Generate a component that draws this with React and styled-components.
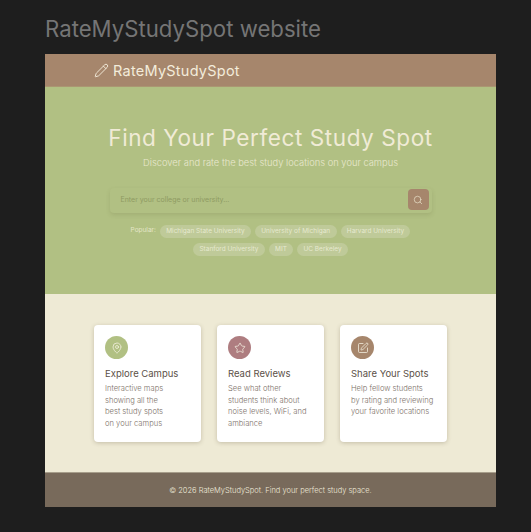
import React from 'react'
import styled, { createGlobalStyle } from 'styled-components'
import { Pencil, MapPin, Star, SquarePen, Search } from 'lucide-react'

const GlobalStyle = createGlobalStyle`
    html, body {
        margin: 0;
        padding: 0;
        background: #1e1e1e;
        font-family: 'Inter', 'Liberation Sans', sans-serif;
    }
    * {
        box-sizing: border-box;
    }
`

const Page = styled.div`
    width: 531px;
    height: 532px;
    overflow: hidden;
    padding: 15px 35px 0 45px;
`

const PageTitle = styled.h1`
    margin: 0 0 11px;
    height: 28px;
    font-size: 22.2px;
    line-height: 28px;
    font-weight: 400;
    color: #757575;
    white-space: nowrap;
`

const Frame = styled.div`
    width: 451px;
    display: flex;
    flex-direction: column;
`

const Header = styled.header`
    height: 33px;
    background: #a6866c;
    border-bottom: 1px solid #ab9672;
    display: flex;
    align-items: center;
    gap: 4px;
    padding-left: 49px;
    color: #f3ecdb;
`

const Brand = styled.span`
    font-size: 14.5px;
    letter-spacing: 0.25px;
`

const Hero = styled.section`
    height: 207px;
    background: #b1c083;
    display: flex;
    flex-direction: column;
    align-items: center;
    padding-top: 36px;
`

const HeroTitle = styled.h2`
    margin: 0;
    font-size: 22.6px;
    line-height: 29px;
    font-weight: 400;
    letter-spacing: 0.55px;
    color: #f0ebd6;
    white-space: nowrap;
`

const HeroText = styled.p`
    margin: 4px 0 0;
    font-size: 9.35px;
    line-height: 14px;
    font-weight: 300;
    color: #e9e8cf;
    white-space: nowrap;
`

const SearchBox = styled.div`
    margin-top: 18px;
    width: 322px;
    height: 25px;
    border-radius: 4px;
    background: #b1c083;
    box-shadow: 0 2px 4px rgba(90, 90, 50, 0.16);
    display: flex;
    align-items: center;
    justify-content: space-between;
    padding: 0 3px 2px 11px;
`

const Placeholder = styled.span`
    font-size: 7px;
    color: #8e9a62;
`

const SearchButton = styled.button`
    width: 21px;
    height: 21px;
    border: 0;
    padding: 0;
    border-radius: 4px;
    background: #a6866c;
    color: #f0ebd6;
    display: flex;
    align-items: center;
    justify-content: center;
`

const Popular = styled.div`
    margin-top: 12px;
    width: 322px;
    display: flex;
    flex-wrap: wrap;
    justify-content: center;
    gap: 5px 4px;
`

const PopularLabel = styled.span`
    font-size: 6.5px;
    line-height: 10px;
    color: #e4e6c8;
`

const Chip = styled.span`
    height: 13px;
    padding: 0 6.3px;
    border-radius: 7px;
    background: #bfca99;
    color: #e6e9cf;
    font-size: 6.5px;
    line-height: 13px;
    white-space: nowrap;
`

const Features = styled.section`
    height: 178px;
    background: #eeead5;
    padding: 31px 49px 0;
    display: flex;
    gap: 16px;
    align-items: flex-start;
`

const Card = styled.article`
    width: 107px;
    height: 117px;
    background: #ffffff;
    border-radius: 4px;
    padding: 11px 11px 0;
    box-shadow: 0 1px 4px rgba(90, 75, 50, 0.28);
`

const IconCircle = styled.div`
    width: 23px;
    height: 23px;
    border-radius: 50%;
    background: ${props => props.$color};
    color: #f5f1e3;
    display: flex;
    align-items: center;
    justify-content: center;
`

const CardTitle = styled.h3`
    margin: 9px 0 0;
    font-size: 9.5px;
    line-height: 12px;
    font-weight: 400;
    color: #5c5148;
    white-space: nowrap;
`

const CardText = styled.p`
    margin: 3px 0 0;
    font-size: 7.6px;
    line-height: 11.6px;
    font-weight: 300;
    color: #7b7067;
    white-space: nowrap;
`

const Footer = styled.footer`
    height: 35px;
    background: #786a5b;
    border-top: 1px solid #a79e8b;
    display: flex;
    align-items: center;
    justify-content: center;
    color: #eee9d9;
    font-size: 7.5px;
    font-weight: 300;
`

const universities = [
    'Michigan State University',
    'University of Michigan',
    'Harvard University',
    'Stanford University',
    'MIT',
    'UC Berkeley',
]

const features = [
    {
        title: 'Explore Campus',
        color: '#b1c083',
        Icon: MapPin,
        lines: ['Interactive maps', 'showing all the', 'best study spots', 'on your campus'],
    },
    {
        title: 'Read Reviews',
        color: '#ae7d80',
        Icon: Star,
        lines: ['See what other', 'students think about', 'noise levels, WiFi, and', 'ambiance'],
    },
    {
        title: 'Share Your Spots',
        color: '#a6866c',
        Icon: SquarePen,
        lines: ['Help fellow students', 'by rating and reviewing', 'your favorite locations'],
    },
]

const App = () => {
    return (
        <>
            <GlobalStyle />
            <Page>
                <PageTitle>RateMyStudySpot website</PageTitle>
                <Frame>
                    <Header>
                        <Pencil size={15} strokeWidth={1.5} />
                        <Brand>RateMyStudySpot</Brand>
                    </Header>
                    <Hero>
                        <HeroTitle>Find Your Perfect Study Spot</HeroTitle>
                        <HeroText>Discover and rate the best study locations on your campus</HeroText>
                        <SearchBox>
                            <Placeholder>Enter your college or university...</Placeholder>
                            <SearchButton aria-label="Search">
                                <Search size={10} strokeWidth={1.5} />
                            </SearchButton>
                        </SearchBox>
                        <Popular>
                            <PopularLabel>Popular:</PopularLabel>
                            {universities.map(name => <Chip key={name}>{name}</Chip>)}
                        </Popular>
                    </Hero>
                    <Features>
                        {features.map(({ title, color, Icon, lines }) => (
                            <Card key={title}>
                                <IconCircle $color={color}>
                                    <Icon size={12} strokeWidth={1.5} />
                                </IconCircle>
                                <CardTitle>{title}</CardTitle>
                                <CardText>
                                    {lines.map(line => <React.Fragment key={line}>{line}<br /></React.Fragment>)}
                                </CardText>
                            </Card>
                        ))}
                    </Features>
                    <Footer>© 2026 RateMyStudySpot. Find your perfect study space.</Footer>
                </Frame>
            </Page>
        </>
    )
}

export default App
